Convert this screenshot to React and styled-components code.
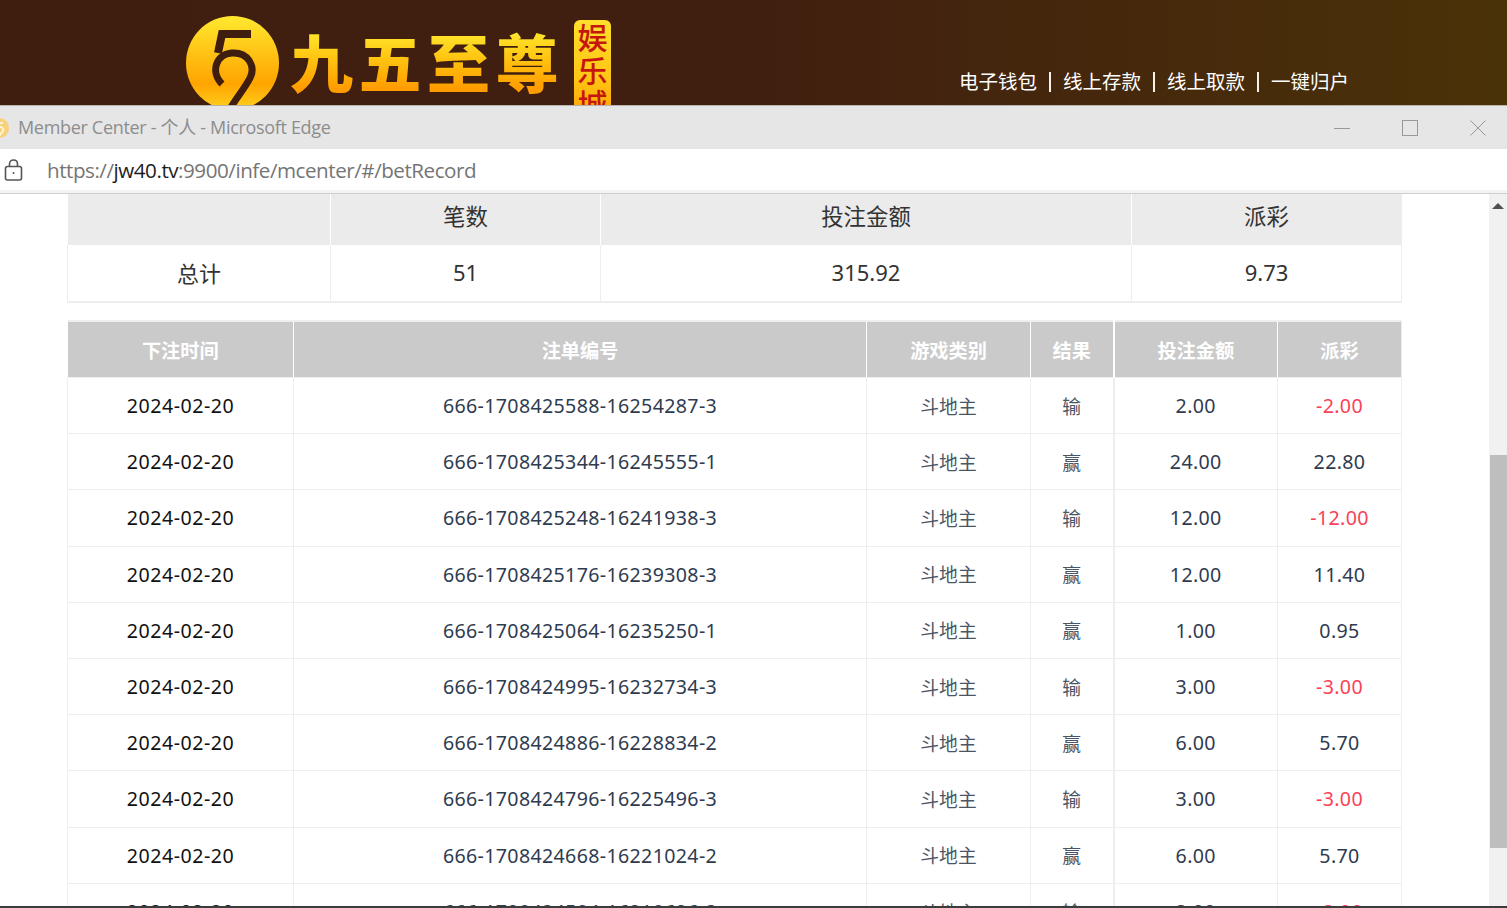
import React from "react";
import styled, { createGlobalStyle } from "styled-components";

const GlobalStyle = createGlobalStyle`
  html, body {
    margin: 0;
    padding: 0;
    background: #fff;
  }
  body {
    font-family: "Noto Sans", "Noto Sans CJK SC", sans-serif;
  }
`;

const Page = styled.div`
  width: 1507px;
  height: 908px;
  display: flex;
  flex-direction: column;
  overflow: hidden;
`;

const Banner = styled.header`
  height: 105px;
  flex: none;
  display: flex;
  padding-left: 186px;
  padding-right: 158px;
  overflow: hidden;
  background: linear-gradient(90deg, #3f1e10 0%, #411f10 50%, #4a3208 100%);
  border-bottom: 1px solid #b9b4ab;
`;

const Brand = styled.div`
  display: flex;
  align-items: flex-start;
`;

const BrandName = styled.div`
  margin: 21px 0 0 11px;
  font-family: "Noto Sans CJK SC", sans-serif;
  font-size: 63px;
  font-weight: 900;
  line-height: 78px;
  letter-spacing: 5.5px;
  white-space: nowrap;
  background: linear-gradient(180deg, #ffe92e 12%, #ffc20f 50%, #ff9d00 86%);
  -webkit-background-clip: text;
  background-clip: text;
  color: transparent;
`;

const BrandTag = styled.div`
  margin: 20px 0 0 10px;
  width: 37px;
  height: 100px;
  flex: none;
  border-radius: 6px;
  background: linear-gradient(180deg, #ffe02a, #ffc414 60%, #ff9e00);
  color: #c5160f;
  font-family: "Noto Sans CJK SC", sans-serif;
  font-size: 30px;
  font-weight: 500;
  line-height: 33px;
  text-align: center;
`;

const Shortcuts = styled.nav`
  margin-left: auto;
  align-self: flex-end;
  padding-bottom: 9px;
  display: flex;
  align-items: center;
  gap: 12px;
  color: #fff;
  font-size: 19.5px;
  line-height: 28px;
`;

const Divider = styled.span`
  width: 2px;
  height: 20px;
  background: #f4f0ea;
`;

const TitleBar = styled.div`
  height: 43px;
  flex: none;
  display: flex;
  align-items: center;
  gap: 9px;
  background: #e6e6e6;
  color: #8d8d8d;
  font-family: "Open Sans", "Noto Sans CJK SC", sans-serif;
  font-size: 18px;
  letter-spacing: -0.32px;
  overflow: hidden;
`;

const TitleIcon = styled.svg`
  width: 18px;
  height: 20px;
  flex: none;
  margin-left: -9px;
`;

const TitleText = styled.span`
  white-space: nowrap;
  margin-bottom: 4px;
`;

const WindowControls = styled.div`
  margin-left: auto;
  display: flex;
  gap: 52px;
  padding-right: 21px;
`;

const WindowIcon = styled.svg`
  width: 16px;
  height: 16px;
  fill: none;
  stroke: #999;
  stroke-width: 1;
`;

const AddressBar = styled.div`
  height: 41px;
  flex: none;
  display: flex;
  align-items: center;
  gap: 24px;
  padding-left: 4px;
  background: #fff;
  border-bottom: 3px solid #f3f3f3;
  box-shadow: 0 1px 0 #cfcfcf;
  font-family: "Open Sans", sans-serif;
  font-size: 20.6px;
  letter-spacing: -0.46px;
  color: #757575;
`;

const LockIcon = styled.svg`
  width: 19px;
  height: 22px;
  flex: none;
  fill: none;
  stroke: #555;
  stroke-width: 1.6;
`;

const UrlHost = styled.span`
  color: #1c1c1c;
`;

const Body = styled.div`
  flex: 1;
  min-height: 0;
  display: flex;
  margin-top: 1px;
`;

const Content = styled.main`
  flex: 1;
  min-width: 0;
  padding: 0 87px 0 67px;
  overflow: hidden;
  display: flex;
  flex-direction: column;
  gap: 17px;
`;

const Table = styled.table`
  width: 100%;
  flex: none;
  table-layout: fixed;
  border-collapse: collapse;
  text-align: center;
`;

const SummaryTable = styled(Table)`
  border-left: 1px solid #eee;
  border-right: 1px solid #eee;
  border-bottom: 2px solid #eee;
`;

const SummaryHead = styled.th`
  height: 51px;
  padding: 0 0 8px;
  box-sizing: border-box;
  background: #ebebeb;
  border-left: 1px solid #fff;
  color: #333;
  font-size: 22.4px;
  font-weight: 400;
`;

const SummaryCell = styled.td`
  height: 57px;
  padding: 0 0 2px;
  box-sizing: border-box;
  border-left: 1px solid #eee;
  color: #333;
  font-size: 22px;
`;

const RecordTable = styled(Table)`
  border-top: 2px solid #eee;
  border-right: 1px solid #eee;
`;

const RecordHead = styled.th`
  height: 55px;
  padding: 0;
  background: #cacaca;
  border-left: 1px solid #fff;
  color: #fff;
  font-size: 19.2px;
  font-weight: 700;

  &:first-child {
    border-left: 0;
  }
  &:nth-child(5) {
    border-left-width: 2px;
  }
`;

const RecordRow = styled.tr`
  height: 56.2px;
  border-top: 1px solid #eee;
`;

const RecordCell = styled.td`
  padding: 0;
  border-left: 1px solid #eee;
  font-size: ${({ $cjk }) => ($cjk ? "18.8px" : "19.6px")};
  letter-spacing: ${({ $cjk, $tone }) =>
    $cjk ? "0" : $tone === "date" ? "0.5px" : "0.35px"};
  color: ${({ $tone }) =>
    $tone === "date"
      ? "#111"
      : $tone === "loss"
      ? "#fa4158"
      : $tone === "soft"
      ? "#4b5565"
      : "#2f3b50"};

  &:nth-child(5) {
    border-left-width: 2px;
  }
`;

const Scrollbar = styled.aside`
  width: 18px;
  flex: none;
  display: flex;
  flex-direction: column;
  align-items: center;
  background: #f1f1f1;
`;

const ScrollArrow = styled.span`
  margin-top: 9px;
  border-left: 6px solid transparent;
  border-right: 6px solid transparent;
  border-bottom: 6px solid #505050;
`;

const ScrollThumb = styled.div`
  width: 17px;
  height: 393px;
  margin: 246px 0 0 1px;
  background: #bebebe;
`;

const BottomEdge = styled.div`
  height: 2px;
  flex: none;
  background: #3c3c3c;
`;

const records = [
  ["666-1708425588-16254287-3", "输", "2.00", "-2.00"],
  ["666-1708425344-16245555-1", "赢", "24.00", "22.80"],
  ["666-1708425248-16241938-3", "输", "12.00", "-12.00"],
  ["666-1708425176-16239308-3", "赢", "12.00", "11.40"],
  ["666-1708425064-16235250-1", "赢", "1.00", "0.95"],
  ["666-1708424995-16232734-3", "输", "3.00", "-3.00"],
  ["666-1708424886-16228834-2", "赢", "6.00", "5.70"],
  ["666-1708424796-16225496-3", "输", "3.00", "-3.00"],
  ["666-1708424668-16221024-2", "赢", "6.00", "5.70"],
  ["666-1708424584-16218626-3", "输", "3.00", "-3.00"],
];

function CoinLogo() {
  return (
    <svg width="93" height="100" viewBox="0 0 93 100" style={{ marginTop: 16, flex: "none" }}>
      <defs>
        <linearGradient id="coinFill" x1="0" y1="0" x2="0" y2="1">
          <stop offset="0" stopColor="#ffe92e" />
          <stop offset="0.72" stopColor="#ffa400" />
          <stop offset="1" stopColor="#ffd21e" />
        </linearGradient>
      </defs>
      <ellipse cx="46.5" cy="47" rx="46.5" ry="47" fill="url(#coinFill)" />
      <path d="M65 18H36L32 37" fill="none" stroke="#3f1e10" strokeWidth="8" />
      <path
        d="M36 68C24 56 30 38 46 37C62 36 70 50 64 62C58 74 48 84 40 100"
        fill="none"
        stroke="#3f1e10"
        strokeWidth="7"
      />
    </svg>
  );
}

function BetRecord() {
  return (
    <>
      <SummaryTable>
        <colgroup>
          <col style={{ width: 263 }} />
          <col style={{ width: 270 }} />
          <col style={{ width: 531 }} />
          <col />
        </colgroup>
        <thead>
          <tr>
            <SummaryHead />
            <SummaryHead>笔数</SummaryHead>
            <SummaryHead>投注金额</SummaryHead>
            <SummaryHead>派彩</SummaryHead>
          </tr>
        </thead>
        <tbody>
          <tr>
            <SummaryCell>总计</SummaryCell>
            <SummaryCell>51</SummaryCell>
            <SummaryCell>315.92</SummaryCell>
            <SummaryCell>9.73</SummaryCell>
          </tr>
        </tbody>
      </SummaryTable>

      <RecordTable>
        <colgroup>
          <col style={{ width: 226 }} />
          <col style={{ width: 573 }} />
          <col style={{ width: 164 }} />
          <col style={{ width: 83 }} />
          <col style={{ width: 164 }} />
          <col />
        </colgroup>
        <thead>
          <tr>
            <RecordHead>下注时间</RecordHead>
            <RecordHead>注单编号</RecordHead>
            <RecordHead>游戏类别</RecordHead>
            <RecordHead>结果</RecordHead>
            <RecordHead>投注金额</RecordHead>
            <RecordHead>派彩</RecordHead>
          </tr>
        </thead>
        <tbody>
          {records.map(([id, result, stake, payout]) => (
            <RecordRow key={id}>
              <RecordCell $tone="date">2024-02-20</RecordCell>
              <RecordCell>{id}</RecordCell>
              <RecordCell $cjk $tone="soft">斗地主</RecordCell>
              <RecordCell $cjk $tone="soft">{result}</RecordCell>
              <RecordCell>{stake}</RecordCell>
              <RecordCell $tone={payout.startsWith("-") ? "loss" : undefined}>{payout}</RecordCell>
            </RecordRow>
          ))}
        </tbody>
      </RecordTable>
    </>
  );
}

export default function App() {
  return (
    <Page>
      <GlobalStyle />
      <Banner>
        <Brand>
          <CoinLogo />
          <BrandName>九五至尊</BrandName>
          <BrandTag>娱乐城</BrandTag>
        </Brand>
        <Shortcuts>
          <span>电子钱包</span>
          <Divider />
          <span>线上存款</span>
          <Divider />
          <span>线上取款</span>
          <Divider />
          <span>一键归户</span>
        </Shortcuts>
      </Banner>

      <TitleBar>
        <TitleIcon viewBox="0 0 18 20">
          <ellipse cx="9" cy="10" rx="9" ry="10" fill="#f6d27a" />
          <path d="M12 5H7L6 9C10 8 13 10 12 13C11 15 9 16 8 18" fill="none" stroke="#fff3d2" strokeWidth="2" />
        </TitleIcon>
        <TitleText>Member Center - 个人 - Microsoft Edge</TitleText>
        <WindowControls>
          <WindowIcon viewBox="0 0 16 16">
            <path d="M0 8.5H16" />
          </WindowIcon>
          <WindowIcon viewBox="0 0 16 16">
            <rect x="0.5" y="0.5" width="15" height="15" />
          </WindowIcon>
          <WindowIcon viewBox="0 0 16 16">
            <path d="M0.5 0.5L15.5 15.5M15.5 0.5L0.5 15.5" />
          </WindowIcon>
        </WindowControls>
      </TitleBar>

      <AddressBar>
        <LockIcon viewBox="0 0 19 22">
          <rect x="1.5" y="7.5" width="16" height="13.5" rx="2" />
          <path d="M5.5 7.5V5C5.5 2.6 7.2 1 9.5 1C11.8 1 13.5 2.6 13.5 5V7.5" />
          <circle cx="9.5" cy="14" r="1" fill="#555" stroke="none" />
        </LockIcon>
        <span>
          https://<UrlHost>jw40.tv</UrlHost>:9900/infe/mcenter/#/betRecord
        </span>
      </AddressBar>

      <Body>
        <Content>
          <BetRecord />
        </Content>
        <Scrollbar>
          <ScrollArrow />
          <ScrollThumb />
        </Scrollbar>
      </Body>
      <BottomEdge />
    </Page>
  );
}
